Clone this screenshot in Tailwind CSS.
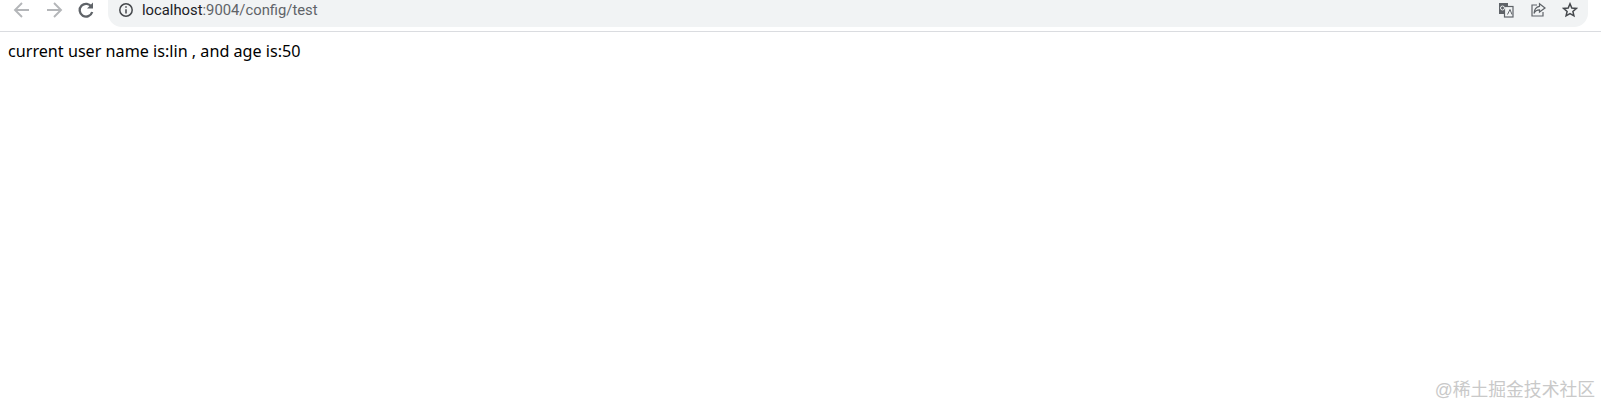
<!DOCTYPE html>
<html>
<head>
<script src="https://cdn.jsdelivr.net/npm/@tailwindcss/browser@4"></script>
</head>
<body class="bg-white overflow-hidden">
<div class="relative w-[1601px] h-[406px] bg-white font-['Liberation_Sans',sans-serif]">
  <header class="h-[32px] flex items-start border-b border-[#dadce0] bg-white">
    <div class="flex items-center h-[20px] pl-[12px] gap-[12px]">
      <svg class="w-[20px] h-[20px]" viewBox="0 0 20 20" fill="none" stroke="#b4b6b9" stroke-width="1.9"><path d="M17 10H3.5M10 3 3 10l7 7"/></svg>
      <svg class="w-[20px] h-[20px]" viewBox="0 0 20 20" fill="none" stroke="#b4b6b9" stroke-width="1.9"><path d="M3 10h13.5M10 3l7 7-7 7"/></svg>
      <svg class="w-[20px] h-[20px]" viewBox="0 0 20 20" fill="none" stroke="#5f6368" stroke-width="2.3"><path d="M15.6 7A6.4 6.4 0 1 0 16.2 12"/><path d="M17 2.5V8.5h-6z" fill="#5f6368" stroke="none"/></svg>
    </div>
    <div class="ml-[12px] w-[1480px] h-[27px] bg-[#f1f3f4] rounded-b-[14px] flex items-start pl-[10px] pr-[10px]">
      <div class="h-[20px] flex items-center">
        <svg class="w-[16px] h-[16px]" viewBox="0 0 16 16" fill="none" stroke="#45484c" stroke-width="1.5"><circle cx="8" cy="8" r="6.2"/><path d="M8 7.2v4.2M8 4.2v1.6"/></svg>
        <span class="ml-[8px] text-[14.8px] leading-[20px] text-[#202124] font-['Roboto',sans-serif]">localhost<span class="text-[#5f6368]">:9004/config/test</span></span>
      </div>
      <div class="ml-auto h-[20px] flex items-center gap-[16px]">
        <svg class="w-[16px] h-[16px]" viewBox="0 0 16 16"><rect x="1" y="1" width="9" height="11" fill="#5f6368"/><rect x="6.5" y="4.5" width="8.5" height="10.5" fill="#f1f3f4" stroke="#5f6368" stroke-width="1.2"/><path d="M9.5 12.5 12 7.5l2 5" stroke="#5f6368" fill="none"/><circle cx="4.5" cy="6" r="2" fill="none" stroke="#f1f3f4"/></svg>
        <svg class="w-[16px] h-[16px]" viewBox="0 0 16 16" fill="none" stroke="#5f6368" stroke-width="1.2"><path d="M7 3H2v11h11v-4"/><path d="M9.5 1.8 15 6l-5.5 4V7.8C7 7.8 5 9 4 11.5 4.2 7.5 6.5 4.8 9.5 4.3z"/></svg>
        <svg class="w-[16px] h-[16px]" viewBox="0 0 16 16" fill="none" stroke="#45484c" stroke-width="1.5"><path d="m8 1.8 1.8 4.2 4.5.4-3.4 3 1 4.4L8 11.5l-3.9 2.3 1-4.4-3.4-3 4.5-.4z"/></svg>
      </div>
    </div>
  </header>
  <p class="pl-[8px] pt-[9px] text-[16.17px] leading-[20px] text-black font-['Noto_Sans',sans-serif]">current user name is:lin , and age is:50</p>
  <div class="absolute right-[6px] bottom-[4px] text-[17.8px] leading-[24px] text-[#c9c9c9] font-['Liberation_Sans','Noto_Sans_CJK_SC',sans-serif]">@稀土掘金技术社区</div>
</div>
</body>
</html>
